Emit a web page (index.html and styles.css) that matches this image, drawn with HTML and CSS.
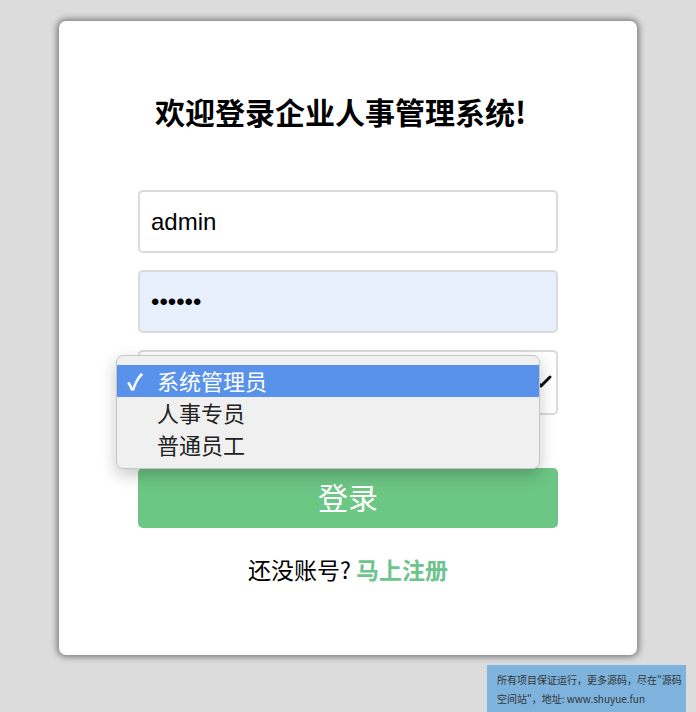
FILE: index.html
```html
<!DOCTYPE html>
<html lang="zh-CN">
<head>
    <meta charset="UTF-8">
    <meta name="viewport" content="width=device-width, initial-scale=1.0">
    <title>企业人事管理系统 - 登录</title>
    <link rel="stylesheet" href="styles.css">
</head>
<body>
    <div class="login-box">
        <h1 class="login-title">欢迎登录企业人事管理系统!</h1>

        <form class="login-form">
            <input class="field" type="text" value="admin">
            <input class="field autofill" type="password" value="123456">
            <div class="field select-field">
                <svg class="chevron" width="24" height="16" viewBox="0 0 24 16">
                    <path d="M3 3 L12 12 L21 3" fill="none" stroke="#111" stroke-width="3" stroke-linecap="round" stroke-linejoin="round"/>
                </svg>
            </div>
            <button class="login-btn" type="button">登录</button>
        </form>

        <p class="register">还没账号? <a href="#">马上注册</a></p>

        <!-- 下拉菜单展开状态 -->
        <ul class="role-menu">
            <li class="selected"><span class="check">✓</span>系统管理员</li>
            <li>人事专员</li>
            <li>普通员工</li>
        </ul>
    </div>

    <div class="notice">所有项目保证运行，更多源码，尽在"源码<br>空间站"，地址: www.shuyue.fun</div>
</body>
</html>
```

FILE: styles.css
```css
body {
    margin: 0;
    background: #dcdcdc;
    font-family: "Noto Sans CJK SC", sans-serif;
    height: 712px;
    overflow: hidden;
}

.login-box {
    position: relative;
    width: 578px;
    height: 634px;
    margin: 21px 0 0 59px;
    background: #fff;
    border-radius: 7px;
    box-shadow: 0 0 6px 2px rgba(0, 0, 0, 0.45);
    box-sizing: border-box;
    padding-top: 70px;
}

.login-title {
    margin: 0;
    padding-right: 15px;
    font-size: 30px;
    line-height: 40px;
    font-weight: bold;
    text-align: center;
    color: #000;
}

.login-form {
    width: 420px;
    margin: 59px auto 0;
    display: flex;
    flex-direction: column;
}

.field {
    height: 63px;
    box-sizing: border-box;
    border: 2px solid #dadada;
    border-radius: 5px;
    padding: 0 11px;
    font-family: "Liberation Sans", Arial, sans-serif;
    font-size: 24px;
    color: #000;
    background: #fff;
    margin-bottom: 17px;
    outline: none;
}

.field.autofill {
    background: #e8f0fe;
}

.select-field {
    height: 65px;
    display: flex;
    align-items: center;
    justify-content: flex-end;
    padding-right: 3px;
    margin-bottom: 53px;
}

.chevron {
    margin-top: -2px;
}

.login-btn {
    height: 60px;
    border: none;
    border-radius: 5px;
    background: #6cc684;
    color: #fff;
    font-family: "Noto Sans CJK SC", sans-serif;
    font-size: 30px;
    line-height: 40px;
    padding: 0 0 4px;
    cursor: pointer;
}

.register {
    margin: 26px 0 0;
    text-align: center;
    font-size: 23px;
    line-height: 30px;
    color: #000;
}

.register a {
    color: #6cc58a;
    font-weight: bold;
    text-decoration: none;
}

.role-menu {
    position: absolute;
    left: 57px;
    top: 334px;
    width: 424px;
    margin: 0;
    padding: 9px 0 7px;
    list-style: none;
    background: #f0f0f0;
    border: 1px solid #c6c6c6;
    border-radius: 7px;
    box-shadow: 0 6px 16px rgba(0, 0, 0, 0.22);
    box-sizing: border-box;
}

.role-menu li {
    height: 32px;
    line-height: 30px;
    padding-left: 40px;
    font-size: 22px;
    color: #222;
    position: relative;
}

.role-menu li.selected {
    background: #5892ea;
    color: #fff;
}

.role-menu .check {
    position: absolute;
    left: 10px;
    font-size: 22px;
    font-weight: bold;
}

.notice {
    position: absolute;
    left: 487px;
    top: 665px;
    width: 199px;
    height: 47px;
    box-sizing: border-box;
    padding: 5px 0 0 10px;
    background: #7eb3dd;
    color: #333;
    font-size: 10px;
    line-height: 19px;
    white-space: nowrap;
}
```
